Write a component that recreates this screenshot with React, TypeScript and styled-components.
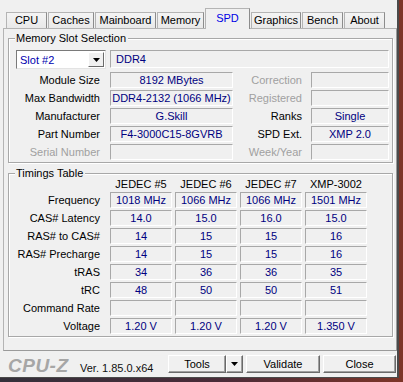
import { Fragment } from "react";
import styled, { createGlobalStyle } from "styled-components";

const GlobalStyle = createGlobalStyle`
  html, body {
    margin: 0;
    padding: 0;
  }
  body {
    width: 403px;
    height: 382px;
    overflow: hidden;
    background: linear-gradient(90deg, #34303a 0%, #4a2b38 55%, #7d3528 100%);
    font-family: "Liberation Sans", Arial, sans-serif;
    font-size: 11px;
    color: #000;
  }
`;

const Window = styled.div`
  width: 399px;
  height: 378px;
  box-sizing: border-box;
  background: #f0f0f0;
  border-right: 2px solid #4a4a4a;
  border-bottom: 1px solid #4a4a4a;
  padding-top: 8px;
  display: flex;
  flex-direction: column;
`;

const TabBar = styled.div`
  display: flex;
  align-items: flex-end;
  gap: 1px;
  height: 21px;
  padding-left: 6px;
  margin-bottom: -1px;
`;

const Tab = styled.div<{ $w: number; $active?: boolean }>`
  box-sizing: border-box;
  width: ${(p) => p.$w}px;
  height: ${(p) => (p.$active ? 21 : 17)}px;
  border: 1px solid #b4b4b4;
  border-right-color: #8c8c8c;
  border-bottom: none;
  background: ${(p) => (p.$active ? "#f0f0f0" : "linear-gradient(#f4f4f4, #e8e8e8)")};
  color: ${(p) => (p.$active ? "#0000e6" : "#000")};
  text-align: center;
  line-height: ${(p) => (p.$active ? 19 : 15)}px;
  position: ${(p) => (p.$active ? "relative" : "static")};
  z-index: ${(p) => (p.$active ? 1 : "auto")};
`;

const Panel = styled.div`
  box-sizing: border-box;
  width: 394px;
  height: 324px;
  margin-left: 3px;
  border: 1px solid #b4b4b4;
  border-right-color: #9a9a9a;
  border-bottom-color: #9a9a9a;
  padding: 0 3px 0 4px;
  display: flex;
  flex-direction: column;
`;

const Group = styled.div<{ $top: number }>`
  margin-top: ${(p) => p.$top}px;
  border: 1px solid #a8a8a8;
  box-shadow: 1px 1px 0 #fff, inset 1px 1px 0 #fff;
  display: flex;
  flex-direction: column;
  padding: 0 3px 2px 7px;
`;

const GroupTitle = styled.div`
  align-self: flex-start;
  margin: -7px 0 0 -1px;
  padding: 0 2px 0 1px;
  line-height: 13px;
  background: #f0f0f0;
`;

const SlotBody = styled.div`
  display: flex;
  flex-direction: column;
  gap: 2px;
  padding-top: 5px;
`;

const SlotRow = styled.div`
  display: flex;
  align-items: flex-start;
  height: 20px;
`;

const Combo = styled.div`
  box-sizing: border-box;
  width: 90px;
  height: 19px;
  display: flex;
  align-items: center;
  background: #fff;
  border: 1px solid;
  border-color: #7a7a7a #e3e3e3 #e3e3e3 #7a7a7a;
  padding: 1px;
`;

const ComboText = styled.span`
  flex: 1;
  color: #0000b0;
  padding-left: 2px;
`;

const ComboButton = styled.div`
  box-sizing: border-box;
  width: 16px;
  height: 15px;
  display: flex;
  align-items: center;
  justify-content: center;
  background: #f0f0f0;
  border: 1px solid;
  border-color: #fff #6a6a6a #6a6a6a #fff;
`;

const Field = styled.div<{ $left?: boolean; $h?: number }>`
  box-sizing: border-box;
  height: ${(p) => p.$h ?? 16}px;
  border: 1px solid;
  border-color: #a8a8a8 #fff #fff #a8a8a8;
  color: #000080;
  text-align: ${(p) => (p.$left ? "left" : "center")};
  padding-left: ${(p) => (p.$left ? 5 : 0)}px;
  line-height: ${(p) => (p.$h ?? 16) - 2}px;
  white-space: nowrap;
  overflow: hidden;
`;

const TypeField = styled(Field)`
  flex: 1;
  margin-left: 4px;
`;

const InfoRow = styled.div`
  display: grid;
  grid-template-columns: 94px 123px 78px 1fr;
  height: 16px;
`;

const Label = styled.div<{ $pad: number; $dim?: boolean }>`
  text-align: right;
  padding-right: ${(p) => p.$pad}px;
  line-height: 16px;
  white-space: nowrap;
  color: ${(p) => (p.$dim ? "#a0a0a0" : "#000")};
`;

const TimingGrid = styled.div`
  display: grid;
  grid-template-columns: 91px repeat(4, 62px);
  grid-auto-rows: 16px;
  grid-template-rows: 12px;
  column-gap: 3px;
  row-gap: 2px;
  margin-top: -2px;
`;

const ColHead = styled.div`
  text-align: center;
  line-height: 12px;
  white-space: nowrap;
`;

const BottomBar = styled.div`
  flex: 1;
  display: flex;
  align-items: center;
  padding-left: 8px;
`;

const Logo = styled.div`
  font-family: "Liberation Sans", Arial, sans-serif;
  font-size: 19px;
  font-weight: bold;
  font-style: italic;
  letter-spacing: 0.5px;
  color: #a6a6a6;
  margin-top: 4px;
  width: 72px;
`;

const Version = styled.div`
  color: #111;
  margin-top: 8px;
  width: 88px;
`;

const Button = styled.div<{ $w: number; $gap?: number }>`
  box-sizing: border-box;
  width: ${(p) => p.$w}px;
  height: 18px;
  margin-left: ${(p) => p.$gap ?? 0}px;
  border: 1px solid;
  border-color: #fff #6a6a6a #6a6a6a #fff;
  box-shadow: inset -1px -1px 0 #a0a0a0;
  background: #f0f0f0;
  display: flex;
  align-items: center;
  justify-content: center;
  line-height: 16px;
`;

const ToolsGroup = styled.div`
  display: flex;
`;

const Arrow = () => (
  <svg width="7" height="4" viewBox="0 0 7 4">
    <polygon points="0,0 7,0 3.5,4" fill="#000" />
  </svg>
);

const tabs: [string, number][] = [
  ["CPU", 41],
  ["Caches", 46],
  ["Mainboard", 61],
  ["Memory", 47],
  ["SPD", 45],
  ["Graphics", 50],
  ["Bench", 41],
  ["About", 41],
];

const info = [
  { l: "Module Size", v: "8192 MBytes", r: "Correction", rv: "", rdim: true },
  { l: "Max Bandwidth", v: "DDR4-2132 (1066 MHz)", r: "Registered", rv: "", rdim: true },
  { l: "Manufacturer", v: "G.Skill", r: "Ranks", rv: "Single" },
  { l: "Part Number", v: "F4-3000C15-8GVRB", r: "SPD Ext.", rv: "XMP 2.0" },
  { l: "Serial Number", v: "", r: "Week/Year", rv: "", dim: true, rdim: true },
];

const heads = ["JEDEC #5", "JEDEC #6", "JEDEC #7", "XMP-3002"];

const timings: [string, string[]][] = [
  ["Frequency", ["1018 MHz", "1066 MHz", "1066 MHz", "1501 MHz"]],
  ["CAS# Latency", ["14.0", "15.0", "16.0", "15.0"]],
  ["RAS# to CAS#", ["14", "15", "15", "16"]],
  ["RAS# Precharge", ["14", "15", "15", "16"]],
  ["tRAS", ["34", "36", "36", "35"]],
  ["tRC", ["48", "50", "50", "51"]],
  ["Command Rate", ["", "", "", ""]],
  ["Voltage", ["1.20 V", "1.20 V", "1.20 V", "1.350 V"]],
];

export default function App() {
  return (
    <>
      <GlobalStyle />
      <Window>
        <TabBar>
          {tabs.map(([name, w]) => (
            <Tab key={name} $w={w} $active={name === "SPD"}>
              {name}
            </Tab>
          ))}
        </TabBar>
        <Panel>
          <Group $top={9}>
            <GroupTitle>Memory Slot Selection</GroupTitle>
            <SlotBody>
              <SlotRow>
                <Combo>
                  <ComboText>Slot #2</ComboText>
                  <ComboButton>
                    <Arrow />
                  </ComboButton>
                </Combo>
                <TypeField $left $h={18}>
                  DDR4
                </TypeField>
              </SlotRow>
              {info.map((row) => (
                <InfoRow key={row.l}>
                  <Label $pad={10} $dim={row.dim}>
                    {row.l}
                  </Label>
                  <Field>{row.v}</Field>
                  <Label $pad={9} $dim={row.rdim}>
                    {row.r}
                  </Label>
                  <Field>{row.rv}</Field>
                </InfoRow>
              ))}
            </SlotBody>
          </Group>
          <Group $top={10}>
            <GroupTitle>Timings Table</GroupTitle>
            <TimingGrid>
              <div />
              {heads.map((h) => (
                <ColHead key={h}>{h}</ColHead>
              ))}
              {timings.map(([name, vals]) => (
                <Fragment key={name}>
                  <Label $pad={7}>{name}</Label>
                  {vals.map((v, i) => (
                    <Field key={i}>{v}</Field>
                  ))}
                </Fragment>
              ))}
            </TimingGrid>
          </Group>
        </Panel>
        <BottomBar>
          <Logo>CPU-Z</Logo>
          <Version>Ver. 1.85.0.x64</Version>
          <ToolsGroup>
            <Button $w={58}>Tools</Button>
            <Button $w={17}>
              <Arrow />
            </Button>
          </ToolsGroup>
          <Button $w={74} $gap={3}>
            Validate
          </Button>
          <Button $w={73} $gap={3}>
            Close
          </Button>
        </BottomBar>
      </Window>
    </>
  );
}
